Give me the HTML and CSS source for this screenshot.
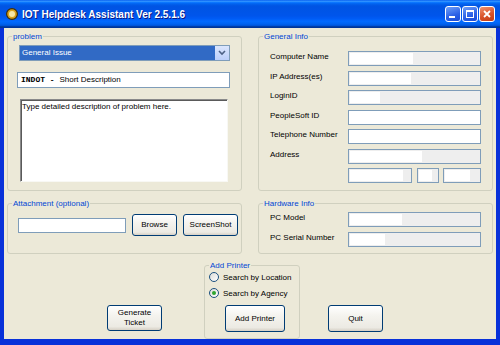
FILE: index.html
```html
<!DOCTYPE html>
<html lang="en">
<head>
    <meta charset="UTF-8">
    <title>IOT Helpdesk Assistant</title>
    <link rel="stylesheet" href="styles.css">
</head>
<body>
    <div class="window">
        <div class="titlebar">
            <svg class="title-icon" width="12" height="12" viewBox="0 0 12 12">
                <circle cx="6" cy="6" r="5.4" fill="#d8a21e" stroke="#3c2c08" stroke-width="1.2"/>
                <circle cx="6" cy="6" r="3" fill="#f6e7a6"/>
            </svg>
            <span class="title">IOT Helpdesk Assistant Ver 2.5.1.6</span>
            <div class="controls">
                <a class="ctl">
                    <svg width="14" height="14" viewBox="0 0 14 14"><rect x="3" y="9" width="6" height="2" fill="#fff"/></svg>
                </a>
                <a class="ctl">
                    <svg width="14" height="14" viewBox="0 0 14 14"><rect x="3.5" y="3.5" width="7" height="7" fill="none" stroke="#fff"/><rect x="3" y="3" width="8" height="2" fill="#fff"/></svg>
                </a>
                <a class="ctl close">
                    <svg width="14" height="14" viewBox="0 0 14 14"><path d="M4 4 L10 10 M10 4 L4 10" stroke="#fff" stroke-width="1.8"/></svg>
                </a>
            </div>
        </div>

        <div class="client">
            <div class="row">
                <fieldset class="group">
                    <legend>problem</legend>
                    <div class="problem-body">
                        <div class="combo">
                            <span class="combo-value">General Issue</span>
                            <span class="combo-btn">
                                <svg width="8" height="6" viewBox="0 0 8 6"><path d="M1 1 L4 4 L7 1" fill="none" stroke="#4d6185" stroke-width="1.6"/></svg>
                            </span>
                        </div>
                        <div class="textbox short"><b class="mono">INDOT - </b>Short Description</div>
                        <div class="memo">Type detailed description of problem here.</div>
                    </div>
                </fieldset>

                <fieldset class="group">
                    <legend>General Info</legend>
                    <div class="info general">
                        <span class="lbl">Computer Name</span>
                        <div class="field ro"><span class="blot" style="width:63px"></span></div>
                        <span class="lbl">IP Address(es)</span>
                        <div class="field ro"><span class="blot" style="width:61px"></span></div>
                        <span class="lbl">LoginID</span>
                        <div class="field ro"><span class="blot" style="width:30px"></span></div>
                        <span class="lbl">PeopleSoft ID</span>
                        <div class="field"></div>
                        <span class="lbl">Telephone Number</span>
                        <div class="field"></div>
                        <span class="lbl">Address</span>
                        <div class="field ro"><span class="blot" style="width:72px"></span></div>
                        <span></span>
                        <div class="triple">
                            <div class="field ro city"><span class="blot" style="width:53px"></span></div>
                            <div class="field ro state"><span class="blot" style="width:13px"></span></div>
                            <div class="field ro zip"><span class="blot" style="width:25px"></span></div>
                        </div>
                    </div>
                </fieldset>
            </div>

            <div class="row mid">
                <fieldset class="group">
                    <legend>Attachment (optional)</legend>
                    <div class="attach-body">
                        <div class="field attach"></div>
                        <button class="btn browse">Browse</button>
                        <button class="btn shot">ScreenShot</button>
                    </div>
                </fieldset>

                <fieldset class="group">
                    <legend>Hardware Info</legend>
                    <div class="info hardware">
                        <span class="lbl">PC Model</span>
                        <div class="field ro"><span class="blot" style="width:52px"></span></div>
                        <span class="lbl">PC Serial Number</span>
                        <div class="field ro"><span class="blot" style="width:35px"></span></div>
                    </div>
                </fieldset>
            </div>

            <div class="bottom">
                <button class="btn generate">Generate<br>Ticket</button>
                <fieldset class="group printer">
                    <legend>Add Printer</legend>
                    <div class="printer-body">
                        <label class="radio-row"><span class="radio"></span>Search by Location</label>
                        <label class="radio-row"><span class="radio checked"></span>Search by Agency</label>
                        <button class="btn add">Add Printer</button>
                    </div>
                </fieldset>
                <button class="btn quit">Quit</button>
            </div>
        </div>
    </div>
</body>
</html>
```

FILE: styles.css
```css
*{
    box-sizing: border-box;
}
body{
    margin: 0;
    font-family: "Liberation Sans", Arial, sans-serif;
    font-size: 8px;
    color: #000;
}
.window{
    width: 500px;
    height: 345px;
    display: flex;
    flex-direction: column;
    background: #0831d9;
}

/* title bar */
.titlebar{
    height: 28px;
    flex: none;
    display: flex;
    align-items: center;
    padding: 0 5px 0 6px;
    background: linear-gradient(180deg, #0058ee 0%, #3593ff 4%, #288eff 6%, #127dff 8%, #036ffc 10%, #0262ee 14%, #0057e5 20%, #0054e3 24%, #0055eb 56%, #005bf5 66%, #026afe 76%, #0062ef 86%, #0052d6 92%, #0040ab 94%, #003092 100%);
}
.title-icon{
    margin-right: 4px;
}
.title{
    flex: 1;
    color: #fff;
    font-size: 10px;
    font-weight: bold;
    text-shadow: 1px 1px #0a1883;
}
.controls{
    display: flex;
    gap: 1px;
}
.ctl{
    width: 16px;
    height: 16px;
    display: flex;
    align-items: center;
    justify-content: center;
    border: 1px solid #fff;
    border-radius: 3px;
    background: linear-gradient(160deg, #6f9ff8, #2a5fe6 60%, #1a4bd6);
}
.ctl.close{
    background: linear-gradient(160deg, #f0926e, #d9532b 55%, #c23a12);
}

/* client area */
.client{
    flex: 1;
    display: flex;
    flex-direction: column;
    padding: 4px 3px 0;
    background: #ece9d8;
    border-style: solid;
    border-color: #0831d9;
    border-width: 0 4px 6px;
}
.row{
    display: flex;
    gap: 16px;
}
.row.mid{
    margin-top: 8px;
}
.group{
    width: 235px;
    margin: 0;
    padding: 0;
    min-width: 0;
    border: 1px solid #d0d0bf;
    border-radius: 3px;
}
.group legend{
    margin-left: 4px;
    padding: 0 1px;
    color: #0046d5;
    font-size: 8px;
    line-height: 9px;
}

/* problem */
.problem-body{
    padding: 4px 11px 8px 9px;
}
.combo{
    display: flex;
    width: 211px;
    height: 16px;
    margin-left: 2px;
    border: 1px solid #7f9db9;
    background: #fff;
}
.combo-value{
    flex: 1;
    padding-left: 2px;
    line-height: 14px;
    color: #fff;
    background: #316ac5;
}
.combo-btn{
    width: 14px;
    display: flex;
    align-items: center;
    justify-content: center;
    background: linear-gradient(180deg, #dbe6fd, #bccffa);
}
.textbox{
    height: 16px;
    border: 1px solid #7f9db9;
    background: #fff;
}
.short{
    margin-top: 11px;
    padding-left: 3px;
    line-height: 14px;
}
.mono{
    font-family: "Liberation Mono", "Courier New", monospace;
    white-space: pre;
}
.memo{
    width: 208px;
    height: 83px;
    margin: 11px 0 0 3px;
    padding: 2px 1px;
    background: #fff;
    border: 1px solid;
    border-color: #8a8a8a #f8f8f4 #f8f8f4 #8a8a8a;
    box-shadow: inset 1px 1px #5a5a5a;
}

/* label / field grids */
.info{
    display: grid;
    grid-template-columns: 78px 133px;
    padding-left: 11px;
}
.info.general{
    row-gap: 4.5px;
    padding-top: 10px;
    padding-bottom: 7px;
}
.info.hardware{
    row-gap: 5px;
    padding-top: 4px;
    padding-bottom: 6px;
}
.lbl{
    line-height: 10px;
    padding-top: 1px;
}
.field{
    height: 15px;
    border: 1px solid #7f9db9;
    background: #fff;
}
.field.ro{
    background: #eeeeee;
}
.blot{
    display: block;
    height: 11px;
    margin: 1px 0 0 1px;
    background: #fff;
}
.triple{
    display: flex;
}
.city{
    width: 64px;
}
.state{
    width: 22px;
    margin-left: 5px;
}
.zip{
    width: 38px;
    margin-left: 4px;
}

/* attachment */
.attach-body{
    display: flex;
    align-items: center;
    gap: 6px;
    padding: 6px 0 17px 10px;
}
.field.attach{
    width: 108px;
}

/* buttons */
.btn{
    padding: 0;
    font-family: inherit;
    font-size: 8px;
    line-height: 10px;
    color: #000;
    border: 1px solid #003c74;
    border-radius: 3px;
    background: linear-gradient(180deg, #fff 0%, #f4f3ee 40%, #eceae3 86%, #d6d0c5 100%);
}
.browse{
    width: 45px;
    height: 22px;
}
.shot{
    width: 55px;
    height: 22px;
}

/* bottom */
.bottom{
    flex: 1;
    display: flex;
    align-items: flex-end;
    padding-left: 100px;
}
.generate{
    width: 55px;
    height: 26px;
    margin-bottom: 8px;
}
.group.printer{
    width: 96px;
    margin-left: 42px;
}
.printer-body{
    padding: 0 0 6px 4px;
}
.radio-row{
    display: flex;
    align-items: center;
    gap: 4px;
    height: 14px;
    white-space: nowrap;
}
.radio-row + .radio-row{
    margin-top: 2px;
}
.radio{
    width: 10px;
    height: 10px;
    border: 1px solid #1c5180;
    border-radius: 50%;
    background: linear-gradient(135deg, #dcdcd7, #fff);
    display: flex;
    align-items: center;
    justify-content: center;
}
.radio.checked::after{
    content: "";
    width: 4px;
    height: 4px;
    border-radius: 50%;
    background: #2fa52f;
}
.add{
    width: 60px;
    height: 27px;
    margin: 5px 0 0 16px;
}
.quit{
    width: 55px;
    height: 27px;
    margin: 0 0 7px 28px;
}
```
